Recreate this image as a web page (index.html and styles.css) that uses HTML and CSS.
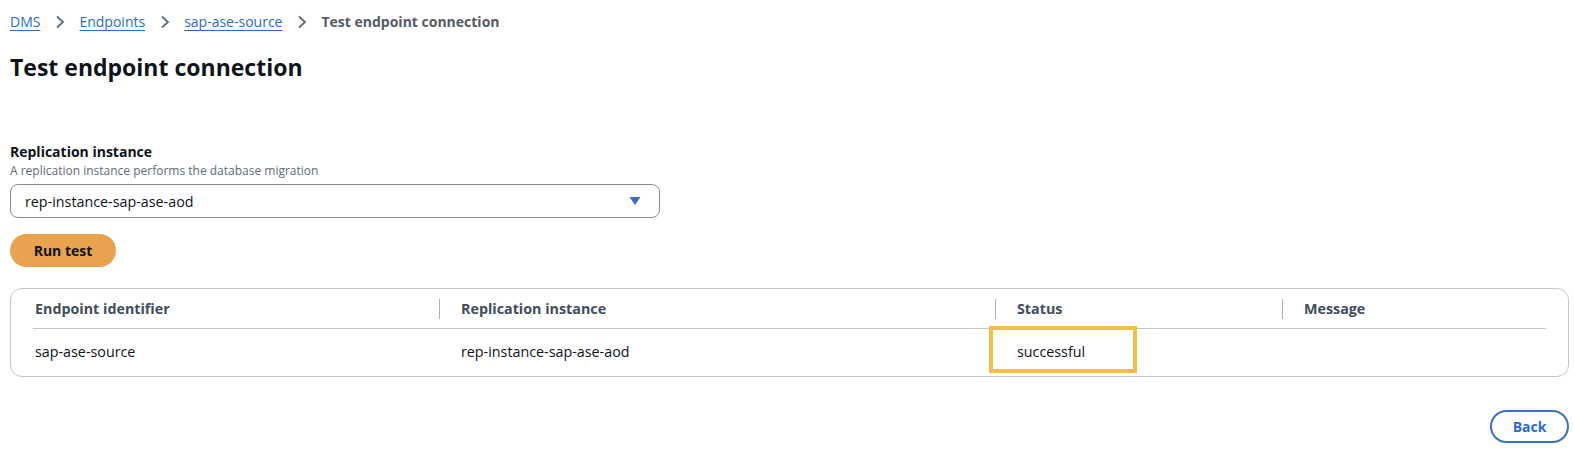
FILE: index.html
```html
<!DOCTYPE html>
<html>
<head>
<meta charset="utf-8">
<link rel="stylesheet" href="styles.css">
</head>
<body>
<div class="page">
  <nav class="crumbs">
    <a class="crumb" href="#">DMS</a>
    <span class="sep"><svg width="10" height="14" viewBox="0 0 10 14"><path d="M2 1.5 L8 7 L2 12.5" fill="none" stroke="#5f6b7a" stroke-width="1.8"/></svg></span>
    <a class="crumb" href="#">Endpoints</a>
    <span class="sep"><svg width="10" height="14" viewBox="0 0 10 14"><path d="M2 1.5 L8 7 L2 12.5" fill="none" stroke="#5f6b7a" stroke-width="1.8"/></svg></span>
    <a class="crumb" href="#">sap-ase-source</a>
    <span class="sep"><svg width="10" height="14" viewBox="0 0 10 14"><path d="M2 1.5 L8 7 L2 12.5" fill="none" stroke="#5f6b7a" stroke-width="1.8"/></svg></span>
    <span class="current">Test endpoint connection</span>
  </nav>
  <h1 class="title">Test endpoint connection</h1>

  <div class="field">
    <div class="label">Replication instance</div>
    <div class="desc">A replication instance performs the database migration</div>
    <div class="select">
      <span>rep-instance-sap-ase-aod</span>
      <svg class="caret" width="12" height="10" viewBox="0 0 12 10"><path d="M0.5 1 L11.5 1 L6 9 Z" fill="#3a6fc9"/></svg>
    </div>
  </div>

  <button class="run">Run test</button>

  <div class="table">
    <div class="thead">
      <div class="th first">Endpoint identifier</div>
      <div class="th">Replication instance</div>
      <div class="th">Status</div>
      <div class="th">Message</div>
    </div>
    <div class="trow">
      <div class="td first">sap-ase-source</div>
      <div class="td">rep-instance-sap-ase-aod</div>
      <div class="td status">successful<span class="highlight"></span></div>
      <div class="td"></div>
    </div>
  </div>

  <div class="actions">
    <button class="back">Back</button>
  </div>
</div>
</body>
</html>
```

FILE: styles.css
```css
* { box-sizing: border-box; }
html, body { margin: 0; padding: 0; background: #fff; overflow: hidden; }
body {
  font-family: "Open Sans", Roboto, Arial, sans-serif;
  color: #0f141a;
  font-size: 14px;
}
.page { padding: 0 5px 0 10px; }
.crumbs {
  display: flex;
  align-items: center;
  height: 43px;
  font-size: 14px;
}
.crumb {
  color: #2a6ccf;
  text-decoration: underline;
  text-underline-offset: 3px;
  font-weight: 500;
}
.sep { display: inline-flex; margin: 0 14px 0 15px; }
.current { color: #545b64; font-weight: 700; }
.title {
  margin: 9px 0 0 0;
  font-size: 23px;
  font-weight: 700;
  line-height: 30px;
  height: 30px;
}
.field { margin-top: 61px; }
.label { font-weight: 700; font-size: 14px; line-height: 18px; }
.desc { color: #5f6b7a; font-size: 12px; line-height: 18px; margin-top: 1px; }
.select {
  margin-top: 4px;
  width: 650px;
  height: 34px;
  border: 1px solid #8c8c94;
  border-radius: 8px;
  display: flex;
  align-items: center;
  justify-content: space-between;
  padding: 0 18px 0 14px;
  font-size: 14.3px;
}
.run {
  margin-top: 16px;
  height: 33px;
  width: 106px;
  border: none;
  border-radius: 17px;
  background: #e9a24e;
  color: #0f141a;
  font-family: inherit;
  font-weight: 700;
  font-size: 14px;
  display: block;
}
.table {
  margin-top: 21px;
  border: 1px solid #c6c6cd;
  border-radius: 12px;
  padding: 0 22px 0 22px;
  font-size: 14.3px;
}
.thead, .trow {
  display: grid;
  grid-template-columns: 406px 556px 287px 1fr;
}
.thead { height: 40px; border-bottom: 1px solid #c6c6cd; }
.th {
  position: relative;
  display: flex;
  align-items: center;
  padding-left: 22px;
  color: #414d5c;
  font-weight: 700;
}
.th:not(.first)::before {
  content: "";
  position: absolute;
  left: 0;
  top: 10px;
  height: 20px;
  border-left: 1px solid #aab2bd;
}
.th.first, .td.first { padding-left: 2px; }
.trow { height: 47px; padding-bottom: 3px; }
.td {
  display: flex;
  align-items: center;
  padding-left: 22px;
}
.status { position: relative; }
.highlight {
  position: absolute;
  left: -6px;
  top: -3px;
  width: 148px;
  height: 47px;
  border: 4px solid #f5bd41;
}
.actions {
  display: flex;
  justify-content: flex-end;
  margin-top: 33px;
}
.back {
  width: 79px;
  height: 33px;
  border: 2px solid #3a6fc9;
  border-radius: 17px;
  background: #fff;
  color: #2a6ccf;
  font-family: inherit;
  font-weight: 700;
  font-size: 14px;
}
```
